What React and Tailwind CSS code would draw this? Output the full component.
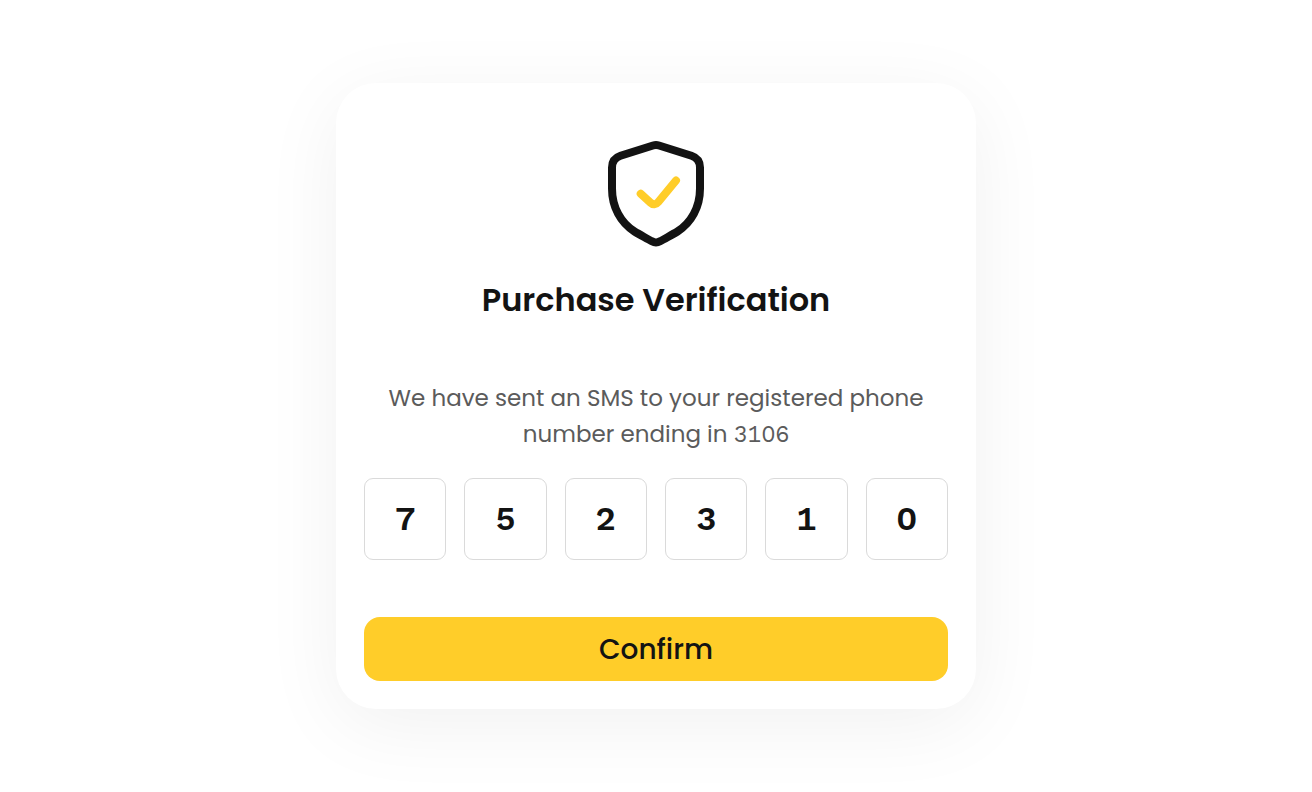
import React, { useState } from 'react';

const ShieldCheck = () => (
    <svg width="96" height="106" viewBox="12 10.5 96 106" fill="none" strokeWidth="8" strokeLinecap="round" strokeLinejoin="round" aria-hidden="true">
        <path
            d="M57 15 Q60 14.1 63 15 L95.5 25.2 Q104 28 104 37 V58 C104 77 95 92.5 81.5 101 C77 103.8 69.5 107.6 64 110.8 Q60 113.2 56 110.8 C50.5 107.6 43 103.8 38.5 101 C25 92.5 16 77 16 58 V37 Q16 28 24.5 25.2 Z"
            stroke="#131313"
        />
        <path d="M44.7 63.3 L54.3 72 C57 74.6 60 74.3 62.3 71.5 L80 50" stroke="#ffcd29" />
    </svg>
);

const PurchaseVerification = ({ lastDigits, initialCode }) => {
    const [code, setCode] = useState(initialCode.split(''));

    const handleChange = (index, value) => {
        setCode(code.map((digit, i) => (i === index ? value : digit)));
    };

    return (
        <form
            onSubmit={(e) => e.preventDefault()}
            className="flex w-full max-w-[640px] flex-col items-center rounded-[40px] bg-white px-7 pt-[58px] pb-7 shadow-[0_16px_80px_rgba(0,0,0,0.06)]"
        >
            <ShieldCheck />
            <h1 className="mt-[35px] text-center text-[32px] leading-9 font-semibold text-[#131313]">Purchase Verification</h1>
            <p className="mt-[62px] max-w-[560px] text-center text-[23px] leading-9 text-[#5b5b5b]">
                We have sent an SMS to your registered phone number ending in{' '}
                <span className="font-['Work_Sans','DejaVu_Sans',sans-serif] tabular-nums">{lastDigits}</span>
            </p>
            <div role="group" aria-label="Verification code" className="mt-[25px] grid w-full grid-cols-6 gap-[18px]">
                {code.map((digit, index) => (
                    <input
                        key={index}
                        type="text"
                        inputMode="numeric"
                        maxLength={1}
                        aria-label={`Digit ${index + 1}`}
                        value={digit}
                        onChange={(e) => handleChange(index, e.target.value)}
                        className="h-[82px] w-full min-w-0 rounded-[9px] border border-[#dadada] bg-white pb-0.5 text-center font-['Work_Sans','DejaVu_Sans',sans-serif] text-[34px] font-semibold text-[#131313] tabular-nums outline-none focus:border-[#ffcd29]"
                    />
                ))}
            </div>
            <button type="submit" className="mt-[57px] h-16 w-full cursor-pointer rounded-2xl bg-[#ffcd29] pt-0.5 text-[28px] font-medium text-[#131313] hover:bg-[#f5c31f]">
                Confirm
            </button>
        </form>
    );
};

const App = () => (
    <main className="flex min-h-screen items-center justify-center bg-white font-['Poppins','Inter',sans-serif]">
        <PurchaseVerification lastDigits="3106" initialCode="752310" />
    </main>
);

export default App;
